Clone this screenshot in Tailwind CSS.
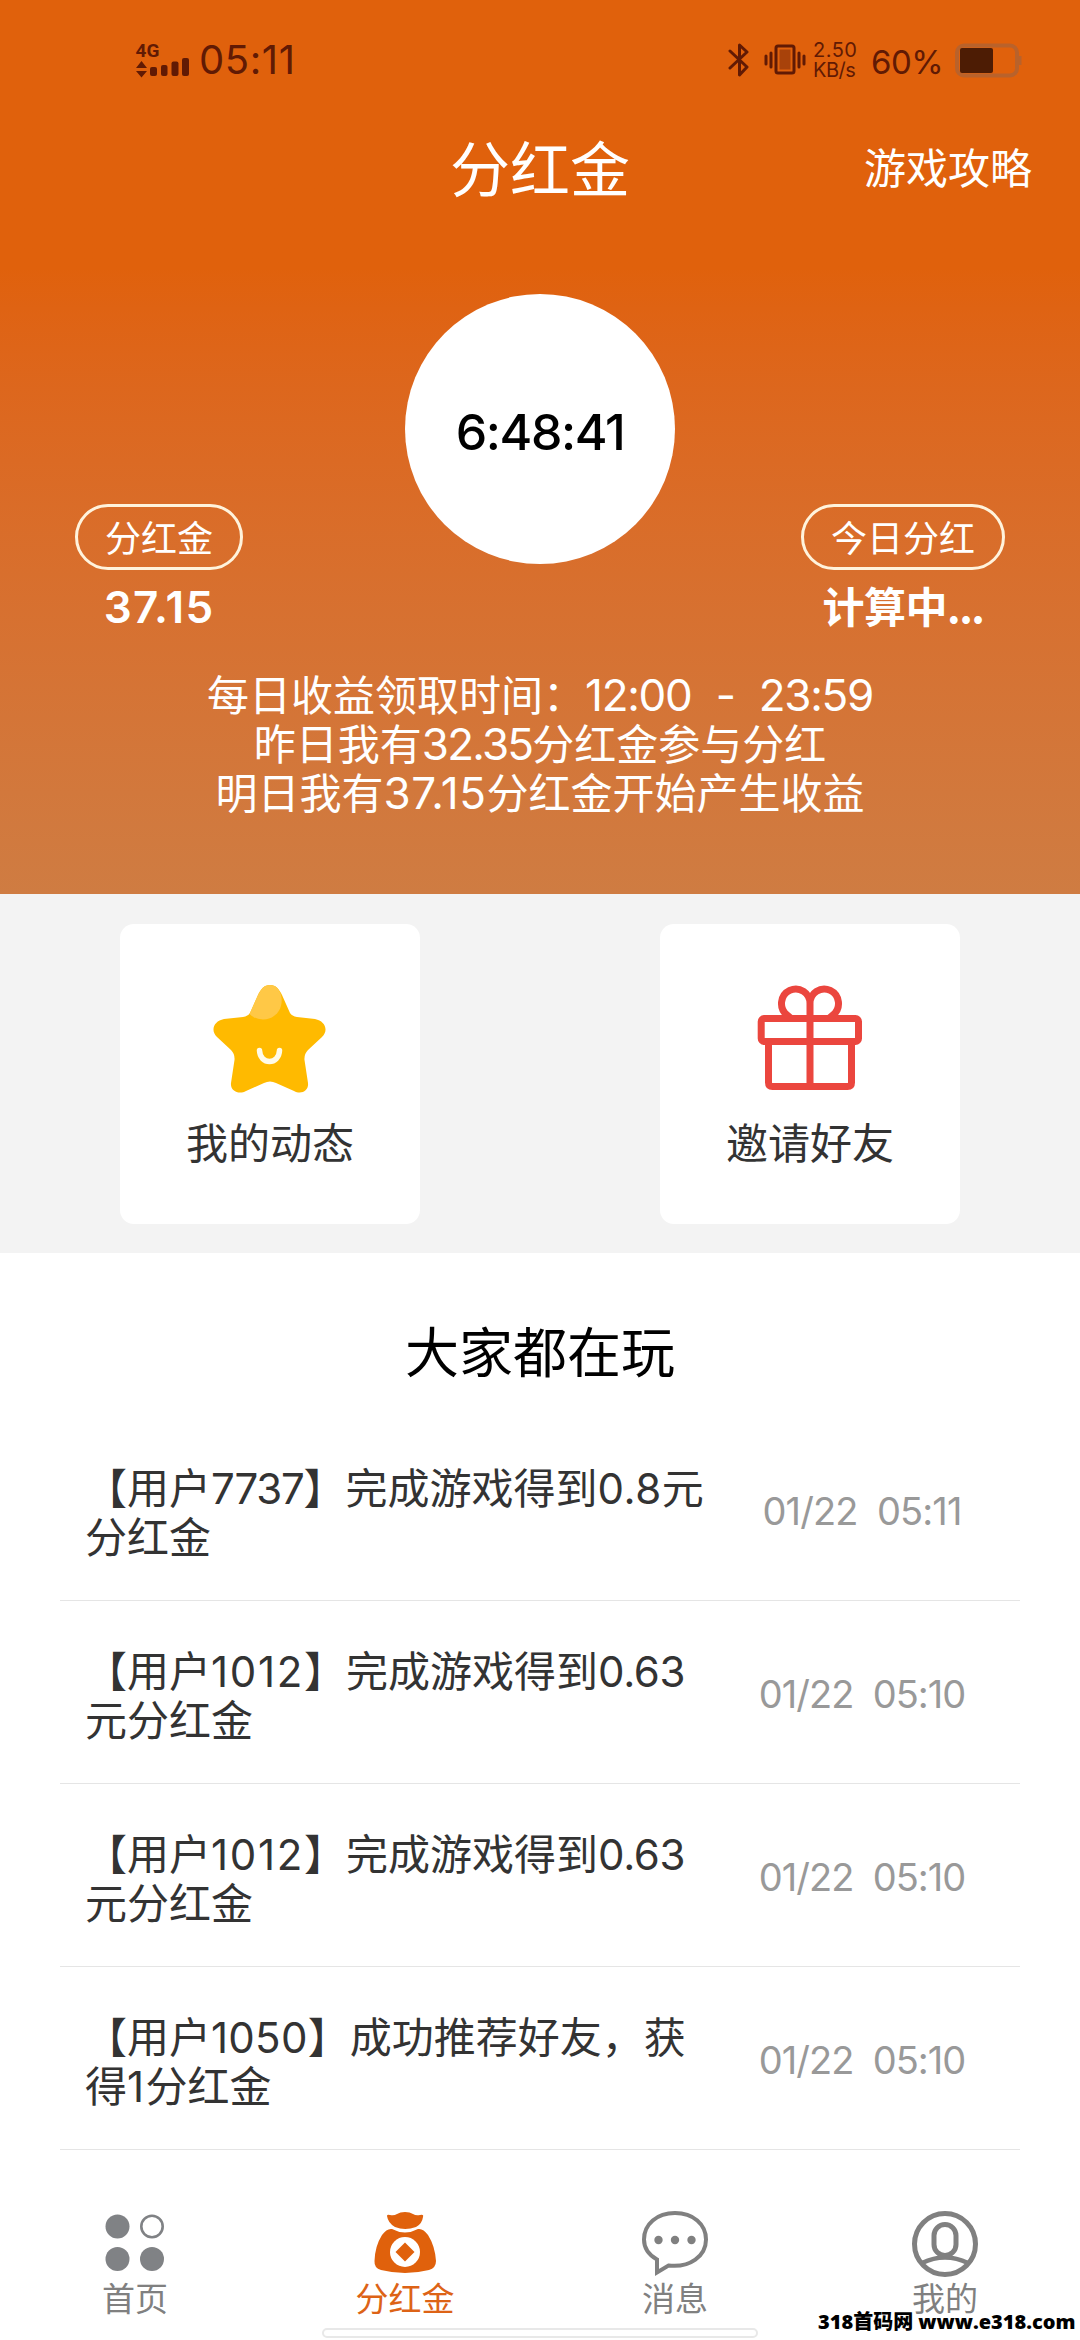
<!DOCTYPE html>
<html lang="zh-CN">
<head>
<meta charset="utf-8">
<title>分红金</title>
<script src="https://cdn.jsdelivr.net/npm/@tailwindcss/browser@4"></script>
</head>
<body class="w-[1080px] h-[2340px] overflow-hidden relative bg-white font-['Noto_Sans_CJK_SC',sans-serif] text-[#333]">
<div class="flex flex-col w-full h-full">

  <section class="h-[894px] flex flex-col text-white bg-linear-to-b from-[#e0610c] from-30% to-[#cf7c42]">
    <!-- status bar -->
    <div class="h-[120px] flex items-center justify-between pl-[135px] pr-[57px] text-[#611a04] font-['Inter',sans-serif]">
      <div class="flex items-center gap-[9px]">
        <svg class="w-[55px] h-[40px] overflow-visible" viewBox="0 0 55 40" fill="#611a04">
          <text x="0.500" y="17" font-family="Roboto, sans-serif" font-weight="700" font-size="19">4G</text>
          <path d="M1 28L6.500 21L12 28ZM1 31H12L6.500 37.500Z"/>
          <rect x="15" y="27" width="7" height="9" rx="2"/><rect x="26" y="25" width="6.500" height="11" rx="2"/><rect x="36.500" y="21.500" width="7" height="14.500" rx="2"/><rect x="47" y="18" width="7" height="18" rx="2"/>
        </svg>
        <span class="text-[40px] leading-[40px] tracking-[0.600px]">05:11</span>
      </div>
      <div class="flex items-center">
        <svg class="w-[22px] h-[36px]" viewBox="0 0 22 36" fill="none" stroke="#611a04" stroke-width="3" stroke-linejoin="round" stroke-linecap="round"><path d="M2 9L19 25L11.500 33V3L19 10L2 26"/></svg>
        <svg class="w-[42px] h-[36px] ml-[14px]" viewBox="0 0 42 36" fill="none" stroke="#611a04" stroke-linecap="round" stroke-width="3"><rect x="12" y="4" width="18" height="27" rx="2"/><rect x="15.500" y="7.500" width="11" height="20" fill="#a8420a" stroke="none"/><path d="M7 11V25M2 14V22M35 11V25M40 14V22"/></svg>
        <span class="ml-[7px] w-[46px] text-[20px] leading-[20px]"><span class="tracking-[0.500px]">2.50</span><br><span class="tracking-[-0.500px]">KB/s</span></span>
        <span class="ml-[12px] w-[73px] pt-[3px] text-[33px] leading-[40px] tracking-[-0.500px]">60%</span>
        <svg class="w-[68px] h-[36px] ml-[11px]" viewBox="0 0 68 36"><rect x="2" y="3.500" width="60" height="30" rx="7" fill="none" stroke="#b9622b" stroke-width="4"/><rect x="5" y="6" width="33" height="25" rx="2" fill="#4d1c04"/><path d="M65 14V23" stroke="#b9622b" stroke-width="3"/></svg>
      </div>
    </div>
    <!-- title -->
    <div class="h-[98px] grid grid-cols-3 items-start px-[48px]">
      <h1 class="col-start-2 text-center text-[60px] leading-[91px]">分红金</h1>
      <span class="text-right text-[42px] leading-[92px]">游戏攻略</span>
    </div>
    <!-- countdown and totals -->
    <div class="h-[451px] grid grid-cols-[1fr_270px_1fr] pt-[76px] px-[75px]">
      <div class="flex flex-col items-start pt-[210px]">
        <div class="flex flex-col items-center">
          <span class="h-[66px] px-[27px] border-3 border-[#fff3dc] rounded-full text-[36px] leading-[59px]">分红金</span>
          <b class="h-[74px] leading-[74px] text-[44px] font-semibold font-['Inter'] tracking-[1.300px]">37.15</b>
        </div>
      </div>
      <div class="w-[270px] h-[270px] rounded-full bg-white text-black flex items-center justify-center font-['Inter'] font-medium text-[50px] tracking-[-1.400px] pt-[6px]">6:48:41</div>
      <div class="flex flex-col items-end pt-[210px]">
        <div class="flex flex-col items-center">
          <span class="h-[66px] px-[27px] border-3 border-[#fff3dc] rounded-full text-[36px] leading-[59px]">今日分红</span>
          <b class="h-[74px] leading-[69px] text-[42px] font-bold tracking-[-0.500px]">计算中<span class="tracking-[-1.500px]">...</span></b>
        </div>
      </div>
    </div>
    <div class="flex flex-col items-center text-[42px] leading-[47px] whitespace-pre">
      <p class="h-[49px]">每日收益领取时间：<span class="font-['Inter'] text-[44px] leading-none tracking-[-1.300px] [word-spacing:1px]">12:00  -  23:59</span></p>
      <p class="h-[49px]">昨日我有<span class="font-['Inter'] text-[44px] leading-none tracking-[-1.800px]">32.35</span>分红金参与分红</p>
      <p class="h-[49px]">明日我有<span class="font-['Inter'] text-[44px] leading-none tracking-[0.600px]">37.15</span>分红金开始产生收益</p>
    </div>
  </section>

  <section class="h-[359px] bg-[#f3f3f3] flex justify-between px-[120px] pt-[30px]">
    <div class="w-[300px] h-[300px] rounded-[14px] bg-white flex flex-col items-center pt-[55px]">
      <svg class="w-[120px] h-[120px]" viewBox="0 0 120 120"><path fill="#ffba00" d="M60 6C66 6 69 10 72 16L80 34Q82 37 87 38L105 40C115 42 119 51 112 58L98 71Q94 75 94.500 81L98 104C99 112 91 116 84 112L66 104Q60 101 54 104L36 112C29 116 20 112 21 104L24.500 81Q25 75 21 71L7 58C0 51 4 42 14 40L33 38Q38 37 40 34L48 16C51 10 54 6 60 6Z"/><path fill="#ffc846" d="M60 6C66 6 69 10 71 16C74 28 67 40 53 40.500Q44 40 39.500 35L48 16C51 10 54 6 60 6Z"/><path d="M49.500 71.500C50 86 69 86 69.500 71.500" fill="none" stroke="#fffbe8" stroke-width="5.500" stroke-linecap="round"/></svg>
      <span class="mt-[12px] text-[42px] leading-[60px]">我的动态</span>
    </div>
    <div class="w-[300px] h-[300px] rounded-[14px] bg-white flex flex-col items-center pt-[55px]">
      <svg class="w-[120px] h-[120px]" viewBox="0 0 120 120" fill="none" stroke="#eb463e" stroke-width="7"><rect x="11.200" y="39.500" width="97.300" height="23" rx="3"/><path d="M18.500 62V103.500Q18.500 107.500 22.500 107.500H97.500Q101.500 107.500 101.500 103.500V62M60 24V107M60 25A14.250 14.500 0 1 0 37 36L41 39.500M60 25A14.250 14.500 0 1 1 83 36L79 39.500"/></svg>
      <span class="mt-[12px] text-[42px] leading-[60px]">邀请好友</span>
    </div>
  </section>

  <section class="h-[898px] px-[60px]">
    <h2 class="h-[165px] pt-[57px] text-center text-[54px] leading-[80px] text-black">大家都在玩</h2>
    <div class="h-[183px] border-b border-[#e5e5e5] flex items-start pl-[25px] pt-[43px]">
      <p class="w-[620px] text-[42px] leading-[49px] whitespace-nowrap">【用户<span class="font-['Inter'] leading-none tracking-[-1.200px]">7737</span>】完成游戏得到<span class="font-['Inter'] leading-none tracking-[0.500px]">0.8</span>元<br>分红金</p>
      <time class="w-[314px] text-center leading-[101px] text-[38px] tracking-[-0.900px] text-[#999] font-['Inter'] whitespace-pre">01/22  05:11</time>
    </div>
    <div class="h-[183px] border-b border-[#e5e5e5] flex items-start pl-[25px] pt-[43px]">
      <p class="w-[620px] text-[42px] leading-[49px] whitespace-nowrap">【用户<span class="font-['Inter'] leading-none tracking-[1.700px]">1012</span>】完成游戏得到<span class="font-['Inter'] leading-none tracking-[-0.400px]">0.63</span><br>元分红金</p>
      <time class="w-[314px] text-center leading-[101px] text-[38px] tracking-[-1px] text-[#999] font-['Inter'] whitespace-pre">01/22  05:10</time>
    </div>
    <div class="h-[183px] border-b border-[#e5e5e5] flex items-start pl-[25px] pt-[43px]">
      <p class="w-[620px] text-[42px] leading-[49px] whitespace-nowrap">【用户<span class="font-['Inter'] leading-none tracking-[1.700px]">1012</span>】完成游戏得到<span class="font-['Inter'] leading-none tracking-[-0.400px]">0.63</span><br>元分红金</p>
      <time class="w-[314px] text-center leading-[101px] text-[38px] tracking-[-1px] text-[#999] font-['Inter'] whitespace-pre">01/22  05:10</time>
    </div>
    <div class="h-[183px] border-b border-[#e5e5e5] flex items-start pl-[25px] pt-[43px]">
      <p class="w-[620px] text-[42px] leading-[49px] whitespace-nowrap">【用户<span class="font-['Inter'] leading-none tracking-[0.250px]">1050</span>】成功推荐好友，获<br>得<span class="font-['Inter'] leading-none tracking-[1.500px]">1</span>分红金</p>
      <time class="w-[314px] text-center leading-[101px] text-[38px] tracking-[-1px] text-[#999] font-['Inter'] whitespace-pre">01/22  05:10</time>
    </div>
  </section>

  <nav class="flex-1 grid grid-cols-4 pt-[57px] text-[33px] leading-[39px] text-[#808080]">
    <div class="flex flex-col items-center">
      <svg class="w-[70px] h-[70px]" viewBox="0 0 70 70" fill="#808285"><circle cx="17.500" cy="18.500" r="12"/><circle cx="52" cy="18.500" r="10.700" fill="none" stroke="#808285" stroke-width="2.600"/><circle cx="17.500" cy="51" r="12"/><circle cx="52" cy="51" r="12"/></svg>
      <span>首页</span>
    </div>
    <div class="flex flex-col items-center text-[#dd6316]">
      <svg class="w-[70px] h-[70px]" viewBox="0 0 70 70" fill="#e0610c"><path d="M17 8Q17 6 20 7Q24 8 27 6Q30 4 35 4T43 6Q46 8 50 7Q54 6 53 9Q52 16 46 19Q35 23 25 19Q18 15 17 8Z"/><path d="M22 21Q35 28 48 21Q53 20 58 27Q65 38 66 53Q66 60 59 62Q35 68 11 62Q4 60 4.500 53Q5 38 12 27Q17 20 22 21Z"/><circle cx="35" cy="44" r="15" fill="#fff"/><path d="M35 34.500L44.500 44L35 53.500L25.500 44Z"/></svg>
      <span>分红金</span>
    </div>
    <div class="flex flex-col items-center">
      <svg class="w-[70px] h-[70px]" viewBox="0 0 70 70" fill="none" stroke="#808080" stroke-width="4"><path d="M17 51.500V64.500L28.500 57.500C50 60 66 48 66 31.500C66 16 53 5 35 5S4 16 4 31.500C4 40 9 47 17 51.500Z"/><g fill="#808080" stroke="none"><circle cx="18.500" cy="32" r="4.200"/><circle cx="35" cy="32" r="4.200"/><circle cx="51.500" cy="32" r="4.200"/></g></svg>
      <span>消息</span>
    </div>
    <div class="flex flex-col items-center">
      <svg class="w-[70px] h-[70px]" viewBox="0 0 70 70" fill="none" stroke="#808080" stroke-width="5"><circle cx="35" cy="36" r="30.500"/><rect x="24" y="16.500" width="22" height="31" rx="11"/><path d="M12 55Q35 44 58 55" stroke-width="4.500"/></svg>
      <span>我的</span>
    </div>
  </nav>
</div>
<!-- gesture bar -->
<div class="absolute left-[322px] top-[2328px] w-[436px] h-[10px] rounded-full bg-white border-2 border-[#e8e8e8]"></div>
<!-- site stamp -->
<div class="absolute left-[818px] top-[2308px] w-[262px] h-[28px] leading-[28px] text-[20px] text-black whitespace-nowrap font-['Open_Sans','Noto_Sans_CJK_SC',sans-serif] font-black">318首码网 www.e318.com</div>
</body>
</html>
